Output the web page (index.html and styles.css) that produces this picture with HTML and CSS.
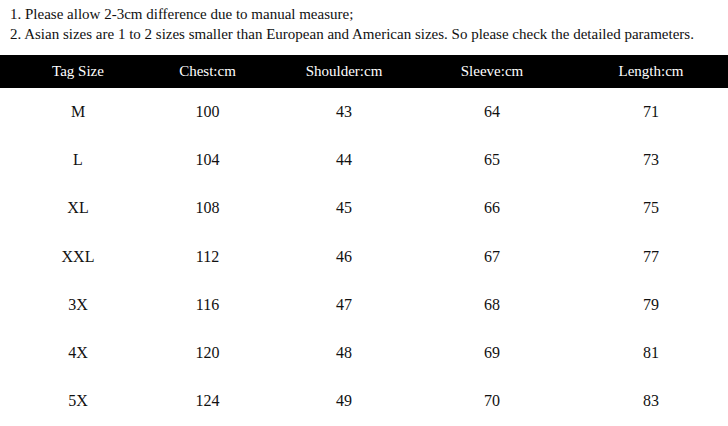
FILE: index.html
```html
<!DOCTYPE html>
<html>
<head>
<meta charset="utf-8">
<link rel="stylesheet" href="styles.css">
</head>
<body>
<div class="notes">
  <p>1. Please allow 2-3cm difference due to manual measure;</p>
  <p>2. Asian sizes are 1 to 2 sizes smaller than European and American sizes. So please check the detailed parameters.</p>
</div>
<div class="table">
  <div class="row head">
    <span>Tag Size</span><span>Chest:cm</span><span>Shoulder:cm</span><span>Sleeve:cm</span><span>Length:cm</span>
  </div>
  <div class="row"><span>M</span><span>100</span><span>43</span><span>64</span><span>71</span></div>
  <div class="row"><span>L</span><span>104</span><span>44</span><span>65</span><span>73</span></div>
  <div class="row"><span>XL</span><span>108</span><span>45</span><span>66</span><span>75</span></div>
  <div class="row"><span>XXL</span><span>112</span><span>46</span><span>67</span><span>77</span></div>
  <div class="row"><span>3X</span><span>116</span><span>47</span><span>68</span><span>79</span></div>
  <div class="row"><span>4X</span><span>120</span><span>48</span><span>69</span><span>81</span></div>
  <div class="row"><span>5X</span><span>124</span><span>49</span><span>70</span><span>83</span></div>
</div>
</body>
</html>
```
FILE: styles.css
```css
html, body {
  margin: 0;
  padding: 0;
  background: #fff;
}
body {
  font-family: "Liberation Serif", "Times New Roman", serif;
  color: #111;
  width: 728px;
  height: 426px;
  overflow: hidden;
}
.notes {
  padding: 4px 0 0 10px;
  font-family: "Liberation Serif", "Times New Roman", serif;
  font-size: 15px;
  line-height: 20px;
}
.notes p {
  margin: 0;
  white-space: nowrap;
}
.table {
  margin-top: 11px;
}
.row {
  display: grid;
  grid-template-columns: 116px 143px 130px 166px 152px;
  padding-left: 20px;
  height: 48.2px;
  line-height: 48px;
  font-size: 16px;
  text-align: center;
}
.row.head {
  background: #000;
  color: #fff;
  height: 33px;
  line-height: 33px;
  font-size: 15px;
}
```
